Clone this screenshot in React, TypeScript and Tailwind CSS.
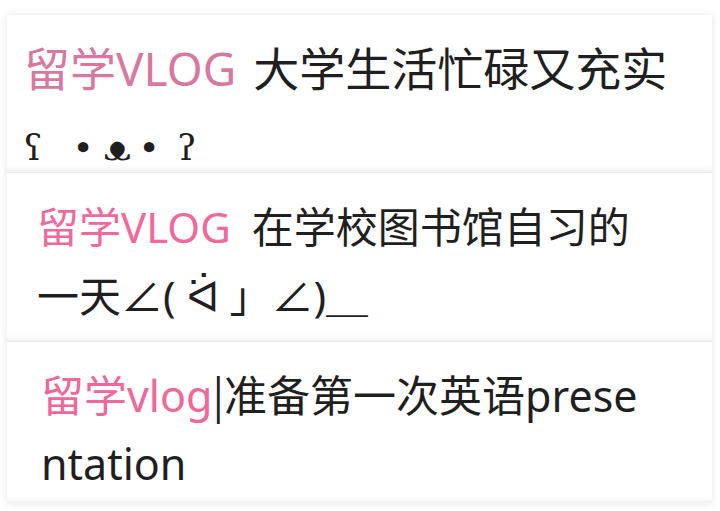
import React from "react";

const font = "font-['Noto_Sans','Noto_Sans_CJK_SC',sans-serif]";

type Post = {
  tag: string;
  lines: React.ReactNode[];
  tagColor: string;
  size: string;
  pad: string;
  height: string;
};

// kaomoji glyphs are placed one by one to match the spacing in the shot
const Bear = () => (
  <span className="font-['DejaVu_Serif',serif] text-[36px]">
    <span className="inline-block w-[24px] text-center ml-[-3px]">ʕ</span>
    <span className="inline-block w-[24px] text-center ml-[26px]">•</span>
    <span className="inline-block w-[24px] text-center ml-[9px]">ᴥ</span>
    <span className="inline-block w-[24px] text-center ml-[9px]">•</span>
    <span className="inline-block w-[24px] text-center ml-[14px]">ʔ</span>
  </span>
);

const posts: Post[] = [
  {
    tag: "留学VLOG",
    tagColor: "text-[#d7799e] mr-[5px]",
    size: "text-[46px] leading-[74px]",
    pad: "pl-[17px] pt-[16px]",
    height: "h-[158px]",
    lines: [<> 大学生活忙碌又充实</>, <Bear />],
  },
  {
    tag: "留学VLOG",
    tagColor: "text-[#f3689a] mr-[10px]",
    size: "text-[42px] leading-[69px]",
    pad: "pl-[30px] pt-[19px]",
    height: "h-[169px]",
    lines: [<> 在学校图书馆自习的</>, <>一天∠( ᐛ 」∠)＿</>],
  },
  {
    tag: "留学vlog",
    tagColor: "text-[#f2679a]",
    size: "text-[43px] leading-[68px]",
    pad: "pl-[34px] pt-[17px]",
    height: "h-[161px]",
    lines: [
      <>
        <span className="font-['Noto_Sans_CJK_SC',sans-serif]">|</span>准备第一次英语prese
      </>,
      <>ntation</>,
    ],
  },
];

export default function App() {
  return (
    <div className="min-h-[511px] w-[720px] bg-white pt-[15px] pl-[7px]">
      <div className="w-[705px] shadow-[0_0_8px_rgba(0,0,0,0.1)]">
        {posts.map((p, i) => (
          <div
            key={i}
            className={`${p.height} ${p.pad} ${font} ${p.size} bg-white text-[#1f1f1f] shadow-[inset_0_-7px_6px_-5px_rgba(0,0,0,0.07)] border-b border-[#ececec] last:border-b-0 whitespace-nowrap`}
          >
            <div>
              <span className={p.tagColor}>{p.tag}</span>
              {p.lines[0]}
            </div>
            <div>{p.lines[1]}</div>
          </div>
        ))}
      </div>
    </div>
  );
}
